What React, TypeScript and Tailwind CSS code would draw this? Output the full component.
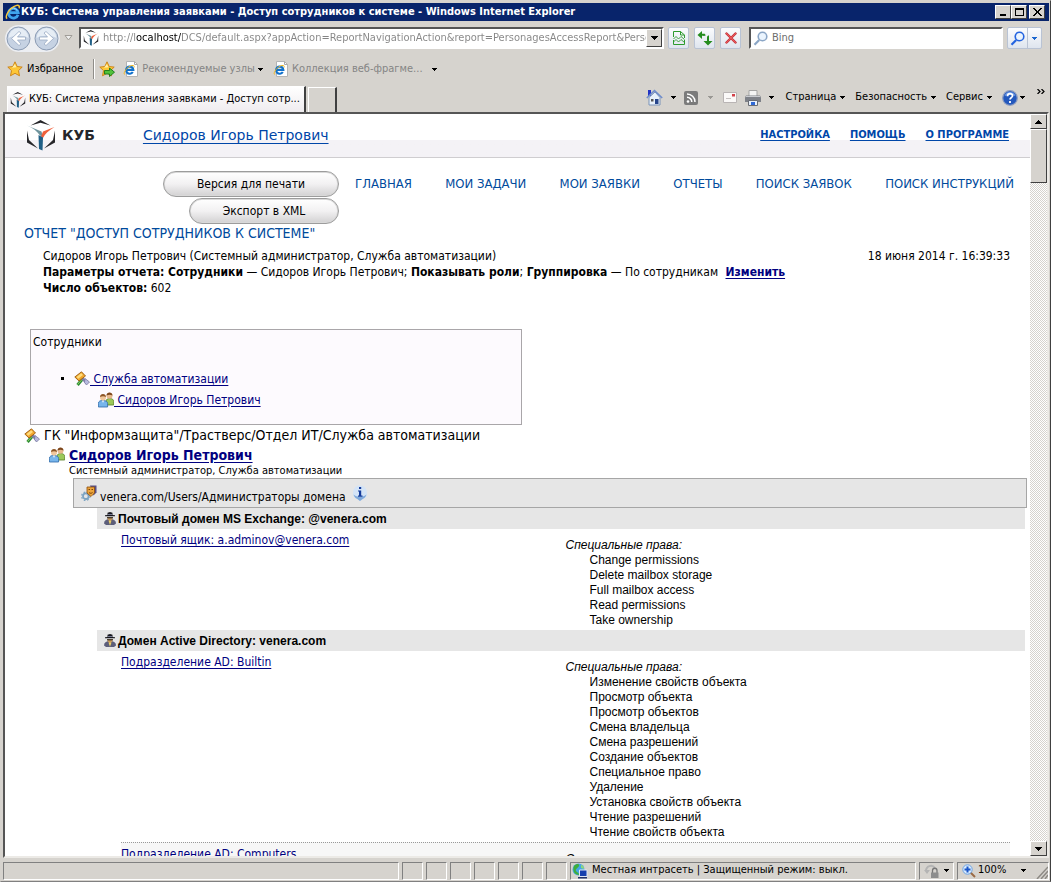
import type { ReactNode } from 'react';

type IconProps = { className?: string };

const URL_TEXT =
  'http://localhost/DCS/default.aspx?appAction=ReportNavigationAction&report=PersonagesAccessReport&PersonagesAccess=1';

const NAV = ['ГЛАВНАЯ', 'МОИ ЗАДАЧИ', 'МОИ ЗАЯВКИ', 'ОТЧЕТЫ', 'ПОИСК ЗАЯВОК', 'ПОИСК ИНСТРУКЦИЙ'];

const MAIL_RIGHTS = [
  'Change permissions',
  'Delete mailbox storage',
  'Full mailbox access',
  'Read permissions',
  'Take ownership',
];

const AD_RIGHTS = [
  'Изменение свойств объекта',
  'Просмотр объекта',
  'Просмотр объектов',
  'Смена владельца',
  'Смена разрешений',
  'Создание объектов',
  'Специальное право',
  'Удаление',
  'Установка свойств объекта',
  'Чтение разрешений',
  'Чтение свойств объекта',
];

/* ---------- icons ---------- */

function IeIcon({ className = 'size-4' }: IconProps) {
  return (
    <svg className={`${className} shrink-0`} viewBox="0 0 16 16" fill="none">
      <path d="M13 10.800A4.800 4.800 0 1 1 13.200 8.600H4.500" stroke="#3fa4ee" strokeWidth="2.800" />
      <path d="M12.200 6.600A4.600 4.600 0 0 0 4 6.400" stroke="#a8dcfb" strokeWidth="1" />
      <path d="M2.200 14.600C-1 13.200 4.500 3.500 11 1.600c3-.8 4 .6 3 2.800" stroke="#f8c83a" strokeWidth="1.500" />
    </svg>
  );
}

function PageIcon() {
  return (
    <svg className="size-4 shrink-0" viewBox="0 0 16 16" fill="none">
      <path d="M3.500.5h8l3 3v12h-11z" fill="#fff" stroke="#b4b4b4" />
      <path d="M11.500.5v3h3" stroke="#a9a9a9" />
      <path d="M9.800 11A3.600 3.600 0 1 1 10.300 8.800H3.500" stroke="#1272cc" strokeWidth="2.200" />
      <path d="M1.500 13.500C0 12 4 5.500 9 4.500c2-.3 2.500.5 2 2" stroke="#f3b71c" strokeWidth="1" />
    </svg>
  );
}

function CubeIcon({ className = 'size-4' }: IconProps) {
  return (
    <svg className={`${className} shrink-0`} viewBox="0 0 28 31">
      <path d="M3.500 5.500 13.500 0l10 5.500-10-2.700z" fill="#26262a" />
      <path d="M0 10.500 2 20l9 8.500L0 22.500z" fill="#26262a" />
      <path d="M28 10.500 26 20l-9 8.500 11-6z" fill="#26262a" />
      <path d="M0 5.500 14.500 11.500 16 17l-3-1.500C10 11 6 8 0 5.500z" fill="#6f949c" />
      <path d="M27.500 7 16 11.500 14 16.500l2 1.500c2-4 5.500-7.500 11.500-11z" fill="#f0613c" />
      <path d="M11.500 15l4.500 2.500-.5 13-3.500-1.500z" fill="#1f5f86" />
    </svg>
  );
}

function Star({ add = false }: { add?: boolean }) {
  return (
    <svg className="size-4 shrink-0" viewBox="0 0 16 16">
      <path
        d="M8 .8l2.200 4.700 5 .6-3.700 3.500 1 5.200L8 12.300l-4.500 2.500 1-5.200L.8 6.100l5-.6z"
        fill="#fdc738"
        stroke="#c97f12"
        strokeWidth=".9"
      />
      <path d="M8 3l1.300 3.300L5 6.800z" fill="#fff0a8" />
      {add && <path d="M5.500 9.500h5V7l5 4.200-5 4.300V13h-5z" fill="#52c23c" stroke="#16781a" strokeWidth=".9" />}
    </svg>
  );
}

function Arrow({ className = 'text-black' }: IconProps) {
  return (
    <svg className={`h-[3px] w-[5px] shrink-0 ${className}`} viewBox="0 0 5 3" shapeRendering="crispEdges">
      <path d="M0 0h5L2.500 3z" fill="currentColor" />
    </svg>
  );
}

function ScrollArrow({ up = false }: { up?: boolean }) {
  return (
    <svg className="h-1 w-[7px]" viewBox="0 0 7 4" shapeRendering="crispEdges">
      <path d={up ? 'M0 4h7L3.500 0z' : 'M0 0h7L3.500 4z'} />
    </svg>
  );
}

function NavCircle({ forward = false }: { forward?: boolean }) {
  return (
    <svg className="size-[25px]" viewBox="0 0 25 25" fill="none">
      <circle cx="12.500" cy="12.500" r="11.500" fill="#c6d2e3" stroke="#8b9bb3" />
      <path d="M2.500 12a10 10 0 0 1 20 0c-5-3-15-3-20 0z" fill="#e6edf5" />
      <path
        d={forward ? 'M5.500 11h8L10 7l2-1.500 7.500 7-7.500 7L10 18l3.500-4h-8z' : 'M19.500 11h-8L15 7l-2-1.500-7.500 7 7.500 7L15 18l-3.500-4h8z'}
        fill="#fff"
        stroke="#9aabc4"
        strokeWidth=".8"
      />
    </svg>
  );
}

function HomeIcon() {
  return (
    <svg className="size-[17px] shrink-0" viewBox="0 0 17 17">
      <path d="M2 1h3v6H2z" fill="#2233c4" />
      <path d="M3 8.500 9 3l5 5.500V16H3z" fill="#e8f1fb" stroke="#7b93b8" />
      <path d="M.8 9 8.500 1.500 16.200 9" fill="none" stroke="#6f8dcb" strokeWidth="1.600" />
      <path d="M9 10h3.500v5H9z" fill="#27458b" />
      <path d="M5 10h2.500v2.500H5z" fill="#555" />
    </svg>
  );
}

function RssIcon() {
  return (
    <svg className="size-[14px] shrink-0" viewBox="0 0 14 14" fill="none">
      <rect width="14" height="14" rx="2" fill="#7b7b7b" />
      <circle cx="4" cy="10.500" r="1.300" fill="#fff" />
      <path d="M3 6.200A4.800 4.800 0 0 1 7.800 11M3 3a8 8 0 0 1 8 8" stroke="#fff" strokeWidth="1.500" />
    </svg>
  );
}

function MailIcon() {
  return (
    <svg className="h-[11px] w-[14px] shrink-0" viewBox="0 0 14 11">
      <path d="M.5.5h13v10H.5z" fill="#fbf9f8" stroke="#b9b4b4" />
      <path d="M9 2h3v2.500H9z" fill="#d3424a" />
      <path d="M3 6.500h5" stroke="#c6c1c1" />
    </svg>
  );
}

function PrinterIcon() {
  return (
    <svg className="size-4 shrink-0" viewBox="0 0 16 16">
      <path d="M4 .5h8V7H4z" fill="#f4f4f4" stroke="#a5a5a5" />
      <path d="M1 5.500h14l1 2V12H0V7.500z" fill="#7e8188" />
      <path d="M1 6.500h14" stroke="#c9cbd0" />
      <path d="M3.500 10.500h9v5h-9z" fill="#e7f0fc" stroke="#686b73" />
      <path d="M6 12h4v3H6z" fill="#2f68d5" />
    </svg>
  );
}

function HelpIcon() {
  return (
    <svg className="size-4 shrink-0" viewBox="0 0 16 16" fill="none">
      <circle cx="8" cy="8" r="7.300" fill="#2358bd" stroke="#8c9cc0" strokeWidth="1.200" />
      <path d="M2.500 6a5.800 5.800 0 0 1 11 0c-3-1.500-8-1.500-11 0z" fill="#6e9ae6" />
      <path d="M5.500 6.200C5.500 2.800 10.800 3 10.500 6c-.2 1.600-2.500 1.800-2.500 3.600M8 11v2" stroke="#fff" strokeWidth="1.800" />
    </svg>
  );
}

function BrokenPageIcon() {
  return (
    <svg className="h-[14px] w-3" viewBox="0 0 12 14" fill="none" stroke="#2d9a2d">
      <path d="M.5 6V.5h7l4 3.500v3M7.500.5V4h4M.5 9v4.500h11V9" />
      <path d="M.5 8 3 5.500 5.500 8 8 5.500l3.500 3M.5 11 3 8.500 5.500 11 8 8.500l3.500 3" strokeWidth=".9" />
    </svg>
  );
}

function RefreshIcon() {
  return (
    <svg className="size-4" viewBox="0 0 16 16" fill="#258c1f">
      <path d="M5 1v2.800h2.500v2H5V9L.5 5z" />
      <path d="M7 3.800c1 0 1.500.7 1.500 2H6z" />
      <path d="M11 15.500 6.500 11H10V7.500C10 6 11 5.500 12 5.500v5.500h3.500z" />
    </svg>
  );
}

function StopIcon() {
  return (
    <svg className="size-3" viewBox="0 0 12 12" fill="none" strokeLinecap="round">
      <path d="M1.500 1.500l9 9M10.500 1.500l-9 9" stroke="#b8262c" strokeWidth="2.400" />
      <path d="M1.500 1.500l9 9M10.500 1.500l-9 9" stroke="#e8575c" strokeWidth="1.200" />
    </svg>
  );
}

function Magnifier({ className = '' }: IconProps) {
  return (
    <svg className={`size-[15px] shrink-0 ${className}`} viewBox="0 0 15 15" fill="none">
      <circle cx="9.500" cy="5.500" r="4.300" fill="#eaf4fe" stroke="currentColor" strokeWidth="1.600" />
      <path d="M6.200 9 1.500 13.700" stroke="currentColor" strokeWidth="2.200" />
    </svg>
  );
}

function ZoomIcon() {
  return (
    <svg className="size-[14px] shrink-0" viewBox="0 0 14 14" fill="none">
      <path d="M8.500 8.500l4.500 4.500" stroke="#9b6b45" strokeWidth="2" />
      <circle cx="5.500" cy="5.500" r="4.700" fill="#d7eafd" stroke="#6da3e4" />
      <path d="M5.500 2.500v6M2.500 5.500h6" stroke="#1b56c8" strokeWidth="2" />
    </svg>
  );
}

function GlobeIcon() {
  return (
    <svg className="size-4 shrink-0" viewBox="0 0 16 16">
      <circle cx="6.500" cy="6.500" r="6" fill="#46a6e6" />
      <path d="M2 3c3-3 6-2 5 0S3 6 4 8s3 1 3 4C3 12 0 8 2 3z" fill="#3fae3a" />
      <path d="M9 2c2 0 3 2 3 4L9 5z" fill="#8fd67a" />
      <path d="M7.500 7h7.500v6.500H7.500z" fill="#163fae" stroke="#dfe6f3" />
      <path d="M6 14h9v1.500H6z" fill="#22326b" />
    </svg>
  );
}

function LockIcon() {
  return (
    <svg className="size-4 shrink-0" viewBox="0 0 16 16" fill="none">
      <path d="M2 8c0-5 6-7 9-3" stroke="#b4b4b4" strokeWidth="2" />
      <path d="M0 7h6l-3 4z" fill="#b4b4b4" />
      <path d="M8.500 10V7.500a2.200 2.200 0 0 1 4.500 0V10" stroke="#777" strokeWidth="1.300" />
      <path d="M7 9.500h7.500V15H7z" fill="#8d8d8d" />
    </svg>
  );
}

function HammerIcon() {
  return (
    <svg className="size-4 shrink-0" viewBox="0 0 16 16">
      <path d="M8.500 8 3.500 14" stroke="#2d8a35" strokeWidth="3" />
      <path d="M8 8.500l-4.500 5" stroke="#8ed468" />
      <path d="M8 7l5 5" stroke="#7f80a8" strokeWidth="3" />
      <path d="M11 7.500 15.500 11l-3 3-2-2.500z" fill="#b9bae0" stroke="#77789e" strokeWidth=".8" />
      <path d="M.8 6 7.500.8 11.500 5 5 10z" fill="#f2a62c" stroke="#9a5b12" strokeWidth=".9" />
      <path d="M2.500 6 7.200 2.200 9 4 4.200 7.800z" fill="#ffdc7c" />
    </svg>
  );
}

function PeopleIcon() {
  return (
    <svg className="size-4 shrink-0" viewBox="0 0 16 16">
      <path d="M8 13V9.500C8 7 10 6.500 12 6.500s3.700 1 3.700 3V13z" fill="#9cc85a" stroke="#577f24" strokeWidth=".8" />
      <circle cx="11.500" cy="3.800" r="3" fill="#e8b98d" />
      <path d="M8.500 3.500c0-4 6-4 6 0-2-1-4-1-6 0z" fill="#7c461c" />
      <path d="M.4 15v-3.500c0-2.500 2-3 4.600-3s4.600 1 4.600 3V15z" fill="#77b5ec" stroke="#2c68a8" strokeWidth=".8" />
      <path d="M4 8.500h2L5 11z" fill="#fff" />
      <circle cx="5" cy="5.500" r="3" fill="#f0c79c" />
      <path d="M2 5c0-4 6-4 6 0-2-1-4-1-6 0z" fill="#8a5425" />
    </svg>
  );
}

function RoleIcon() {
  return (
    <svg className="size-4 shrink-0" viewBox="0 0 16 16">
      <circle cx="4.800" cy="11.200" r="2.800" fill="none" stroke="#7ba3c2" strokeWidth="1.800" />
      <circle cx="4.800" cy="11.200" r="4.200" fill="none" stroke="#7ba3c2" strokeWidth="1.200" strokeDasharray="1.700 1.700" />
      <path d="M9 .5h6.500v7l-3 3z" fill="#574f86" />
      <path d="M6 2h7.500v6L10 11.500 6 8z" fill="#eda53a" stroke="#8a4c10" strokeWidth=".8" />
      <path d="M7.500 4.500h1.500M10.500 4.500H12M8 7.500c1 1 2.500 1 3.500 0" stroke="#6b3608" strokeWidth=".9" fill="none" />
    </svg>
  );
}

function InfoIcon() {
  return (
    <svg className="size-4 shrink-0" viewBox="0 0 16 16">
      <path d="M8 .5a7 7 0 0 1 3 13.300L8 16l-3-2.200A7 7 0 0 1 8 .5z" fill="#d4e4f7" />
      <path d="M1.500 9.500c3 3 10 3 13 0-.6 2.400-2 3.600-3.500 4.300L8 16l-3-2.200c-1.500-.7-3-1.900-3.500-4.300z" fill="#7fa9da" />
      <path d="M7 2h2.200v2H7zM6 5.500h3.200v5h1.300v1.200H6v-1.200h1V6.500H6z" fill="#143c9c" />
    </svg>
  );
}

function AgentIcon() {
  return (
    <svg className="h-[13px] w-3 shrink-0" viewBox="0 0 12 13">
      <path d="M0 11.500C0 8.500 2 7 6 7s6 1.500 6 4.500L10 13H2z" fill="#5c5e7a" />
      <path d="M3 5h6L8 8 6 9.500 4 8z" fill="#c89a5c" />
      <path d="M1 3.300 3.500 3V.8L6 0l2.500.8V3l2.500.3v1H1z" fill="#17171c" />
      <path d="M4 2.500h4" stroke="#8f93b8" strokeWidth=".8" />
      <path d="M4.700 9.300l1.300-1 1.300 1L6 12.800z" fill="#ecd36b" />
      <path d="M3 5.800h6" stroke="#17171c" />
    </svg>
  );
}

/* ---------- browser frame ---------- */

const RAISED = 'border border-t-white border-l-white border-r-[#404040] border-b-[#404040] bg-[#d6d3ce]';
const SUNKEN = 'border border-t-[#808080] border-l-[#808080] border-r-white border-b-white';

function CaptionButton({ label, children }: { label: string; children: ReactNode }) {
  return (
    <button aria-label={label} className={`flex h-[14px] w-4 items-center justify-center ${RAISED}`}>
      <svg className="h-2 w-[9px]" viewBox="0 0 9 8" fill="none" stroke="#000" shapeRendering="crispEdges">
        {children}
      </svg>
    </button>
  );
}

function ToolButton({ label, children }: { label: string; children: ReactNode }) {
  return (
    <button
      aria-label={label}
      className="flex h-[22px] w-[21px] items-center justify-center rounded-xs border border-[#b9c3d4] bg-linear-to-b from-[#fbfcfe] to-[#dfe5ee]"
    >
      {children}
    </button>
  );
}

function TitleBar() {
  return (
    <div className="flex h-[18px] shrink-0 items-center bg-[#08246b] pr-1 pl-0.5 text-white">
      <IeIcon />
      <h1 className="flex-1 truncate text-[11px] font-bold">
        КУБ: Система управления заявками - Доступ сотрудников к системе - Windows Internet Explorer
      </h1>
      <CaptionButton label="Свернуть">
        <path d="M1 6.500h6M1 7.500h6" />
      </CaptionButton>
      <CaptionButton label="Развернуть">
        <path d="M.5.500h8v7h-8zM0 1.500h9" />
      </CaptionButton>
      <span className="w-0.5" />
      <CaptionButton label="Закрыть">
        <path d="M1 0l7 8M8 0L1 8" strokeWidth="1.500" />
      </CaptionButton>
    </div>
  );
}

function AddressBar() {
  return (
    <div className="flex h-[34px] shrink-0 items-center pr-[7px] pl-0.5">
      <div className="flex gap-[3px] rounded-full bg-[#eceef2] p-px">
        <button aria-label="Назад">
          <NavCircle />
        </button>
        <button aria-label="Вперед">
          <NavCircle forward />
        </button>
      </div>
      <svg className="mx-1 mr-1.5 h-1.5 w-[9px]" viewBox="0 0 9 6">
        <path d="M1 .5h7L4.500 5z" fill="#eee" stroke="#a09d98" />
      </svg>
      <div className="flex h-[22px] min-w-0 flex-1 items-center border-2 border-t-[#555] border-r-white border-b-white border-l-[#555] bg-white pl-0.5">
        <CubeIcon />
        <input
          aria-label="Адрес"
          defaultValue={URL_TEXT}
          className="ml-1 h-4 min-w-0 flex-1 bg-[linear-gradient(90deg,#858585_33px,#000_33px,#000_78px,#858585_78px)] bg-clip-text text-[11px] text-transparent outline-none"
        />
        <button aria-label="Показать адреса" className={`flex h-[18px] w-4 items-center justify-center ${RAISED}`}>
          <ScrollArrow />
        </button>
      </div>
      <div className="mr-2 ml-1 flex gap-[5px]">
        <ToolButton label="Режим совместимости">
          <BrokenPageIcon />
        </ToolButton>
        <ToolButton label="Обновить">
          <RefreshIcon />
        </ToolButton>
        <ToolButton label="Остановить">
          <StopIcon />
        </ToolButton>
      </div>
      <div className="flex h-[22px] w-[254px] items-center border-2 border-t-[#555] border-r-white border-b-white border-l-[#555] bg-white pl-0.5">
        <Magnifier className="text-[#8ba6c6]" />
        <input
          aria-label="Поиск"
          placeholder="Bing"
          className="ml-1 min-w-0 flex-1 text-[11px] outline-none placeholder:text-[#6d6d6d]"
        />
      </div>
      <div className="ml-1 flex h-[22px] rounded-xs border border-[#b9c3d4] bg-linear-to-b from-[#fbfcfe] to-[#dfe5ee]">
        <button aria-label="Найти" className="flex w-5 items-center justify-center border-r border-[#b9c3d4] text-[#2464e0]">
          <Magnifier />
        </button>
        <button aria-label="Параметры поиска" className="flex w-[13px] items-center justify-center">
          <Arrow className="text-[#1a66d0]" />
        </button>
      </div>
    </div>
  );
}

function FavoritesBar() {
  return (
    <div className="flex h-7 shrink-0 items-center pl-1 text-[11px] text-[#858585]">
      <button className="flex items-center gap-1 text-black">
        <Star />
        Избранное
      </button>
      <span className="mr-1 ml-2.5 h-5 w-0.5 border-l border-[#8f8d89] bg-white" />
      <button aria-label="Добавить на панель избранного" className="mr-2">
        <Star add />
      </button>
      <button className="flex items-center gap-[3px]">
        <PageIcon />
        Рекомендуемые узлы
        <Arrow />
      </button>
      <button className="ml-2.5 flex items-center gap-[3px]">
        <PageIcon />
        Коллекция веб-фрагме...
        <Arrow className="ml-1.5 text-black" />
      </button>
    </div>
  );
}

function TabBar() {
  return (
    <div className="flex h-[29px] shrink-0 items-end pr-1 pl-1 text-[11px]">
      <button className="flex h-[26px] w-[299px] items-center gap-[3px] border border-t-white border-r-2 border-b-0 border-l-white border-r-[#404040] bg-linear-to-b from-white to-[#efecef] pl-0.5">
        <CubeIcon />
        <span className="truncate">КУБ: Система управления заявками - Доступ сотр...</span>
      </button>
      <button
        aria-label="Новая вкладка"
        className="ml-0.5 h-[25px] w-[29px] border border-t-white border-r-2 border-b-0 border-l-white border-r-[#404040]"
      />
      <div className="ml-auto flex h-[29px] items-center">
        <button aria-label="Домой" className="flex items-center gap-2">
          <HomeIcon />
          <Arrow />
        </button>
        <button aria-label="Веб-каналы" className="ml-2 flex items-center gap-2.5">
          <RssIcon />
          <Arrow className="text-[#9a9894]" />
        </button>
        <button aria-label="Почта" className="ml-2.5">
          <MailIcon />
        </button>
        <button aria-label="Печать" className="mr-3 ml-2 flex items-center gap-2">
          <PrinterIcon />
          <Arrow />
        </button>
        {['Страница', 'Безопасность', 'Сервис'].map((label) => (
          <button key={label} className="mr-2.5 flex items-center gap-1">
            {label}
            <Arrow />
          </button>
        ))}
        <button aria-label="Справка" className="flex items-center gap-0.5">
          <HelpIcon />
          <Arrow />
        </button>
        <button aria-label="Еще" className="mb-3 ml-3">
          <svg className="h-[5px] w-2" viewBox="0 0 8 5" fill="none" stroke="#000" strokeWidth="1.200">
            <path d="M.5 0 3 2.500.5 5M4.500 0 7 2.500 4.500 5" />
          </svg>
        </button>
      </div>
    </div>
  );
}

function Scrollbar() {
  return (
    <div className="flex w-[17px] shrink-0 flex-col bg-[repeating-conic-gradient(#fff_0_25%,#d6d3ce_0_50%)] bg-[length:2px_2px]">
      <button aria-label="Вверх" className={`flex h-[15px] items-center justify-center ${RAISED}`}>
        <ScrollArrow up />
      </button>
      <div className={`h-[54px] ${RAISED}`} />
      <button aria-label="Вниз" className={`mt-auto flex h-[15px] items-center justify-center ${RAISED}`}>
        <ScrollArrow />
      </button>
    </div>
  );
}

function StatusBar() {
  return (
    <div className="flex h-[23px] shrink-0 items-center gap-[3px] pt-0.5 text-[11px]">
      <div className={`h-[18px] flex-1 ${SUNKEN}`} />
      {[1, 2, 3, 4, 5, 6, 7].map((n) => (
        <div key={n} className={`h-[18px] w-[21px] ${SUNKEN}`} />
      ))}
      <div className={`flex h-[18px] w-[346px] items-center gap-1 pl-px ${SUNKEN}`}>
        <GlobeIcon />
        Местная интрасеть | Защищенный режим: выкл.
      </div>
      <div className={`flex h-[18px] w-[35px] items-center justify-between px-1 ${SUNKEN}`}>
        <LockIcon />
        <Arrow />
      </div>
      <div className={`flex h-[18px] w-[92px] items-center pl-1 ${SUNKEN}`}>
        <ZoomIcon />
        <span className="ml-0.5 flex-1">100%</span>
        <Arrow />
        <svg className="ml-2.5 h-[14px] w-3 self-end" viewBox="0 0 12 14" stroke="#8d8a85" strokeWidth="1.500">
          <path d="M1 14 12 2M5 14l7-8M9 14l3-4" />
        </svg>
      </div>
    </div>
  );
}

/* ---------- report page ---------- */

function PillButton({ className, children }: { className: string; children: ReactNode }) {
  return (
    <button
      className={`h-[26px] rounded-full border border-[#9c9c9c] bg-linear-to-b from-white via-[#f2f1f2] to-[#d2d1d2] text-[12px] shadow-[inset_0_0_0_1px_#d9d9d9] ${className}`}
    >
      {children}
    </button>
  );
}

function SectionHeader({ children }: { children: ReactNode }) {
  return (
    <h3 className="mr-[5px] ml-[92px] flex h-[21px] items-center gap-0.5 bg-[#e6e6e6] pl-[7px] font-['Liberation_Sans',sans-serif] text-[12px] font-bold">
      <AgentIcon />
      {children}
    </h3>
  );
}

function ObjectRow({ name, rights, alt = false }: { name: string; rights: string[]; alt?: boolean }) {
  return (
    <div
      className={`mr-5 ml-[116px] grid grid-cols-2 pb-0.5 leading-[15px] text-[12px] ${alt ? 'border-t border-dotted border-[#999] bg-[#f7f7f7]' : ''}`}
    >
      <div className="pt-1">
        <a href="#" className="block w-fit text-[#000080] underline underline-offset-2">
          {name}
        </a>
      </div>
      <div className="pt-[9px] font-['Liberation_Sans',sans-serif]">
        <p className="italic">Специальные права:</p>
        <ul className="pl-6">
          {rights.map((right) => (
            <li key={right}>{right}</li>
          ))}
        </ul>
      </div>
    </div>
  );
}

function Report() {
  return (
    <main className="min-w-0 flex-1 overflow-hidden bg-white">
      <header className="flex h-11 items-center border-b border-[#cfcdd0] bg-linear-to-b from-white from-60% to-[#f4f2f6] to-60% pr-[21px] pl-[22px] text-[#0046a8]">
        <CubeIcon className="h-[31px] w-7" />
        <span className="ml-[7px] font-['DejaVu_Sans',sans-serif] text-[14px] font-bold text-[#26262a]">КУБ</span>
        <a href="#" className="ml-12 font-['DejaVu_Sans',sans-serif] text-[14px] underline underline-offset-3">
          Сидоров Игорь Петрович
        </a>
        <div className="ml-auto flex gap-5 text-[11px] font-bold">
          {['НАСТРОЙКА', 'ПОМОЩЬ', 'О ПРОГРАММЕ'].map((label) => (
            <a key={label} href="#" className="underline underline-offset-2">
              {label}
            </a>
          ))}
        </div>
      </header>

      <div className="flex items-start pt-[13px] pr-4">
        <div className="flex w-[334px] shrink-0 flex-col items-end gap-px">
          <PillButton className="w-44">Версия для печати</PillButton>
          <PillButton className="w-[150px]">Экспорт в XML</PillButton>
        </div>
        <nav className="ml-4 flex h-[26px] flex-1 items-center justify-between text-[13px] text-[#004a9c]">
          {NAV.map((label) => (
            <a key={label} href="#">
              {label}
            </a>
          ))}
        </nav>
      </div>

      <h2 className="pl-[19px] text-[14px] leading-[18px] text-[#004a9c]">ОТЧЕТ "ДОСТУП СОТРУДНИКОВ К СИСТЕМЕ"</h2>

      <div className="mt-1.5 flex justify-between pr-5 pl-[38px] text-[12px] leading-4">
        <div>
          <p>Сидоров Игорь Петрович (Системный администратор, Служба автоматизации)</p>
          <p>
            <b>Параметры отчета: Сотрудники</b> — Сидоров Игорь Петрович; <b>Показывать роли</b>; <b>Группировка</b> — По
            сотрудникам{' '}
            <a href="#" className="ml-1 font-bold text-[#000080] underline underline-offset-2">
              Изменить
            </a>
          </p>
          <p>
            <b>Число объектов:</b> 602
          </p>
        </div>
        <time className="shrink-0">18 июня 2014 г. 16:39:33</time>
      </div>

      <section className="mt-[33px] ml-[25px] h-24 w-[48%] border border-[#a9a6a9] bg-[#fdfafe] pt-1 pl-0.5 text-[12px] leading-4">
        <h3>Сотрудники</h3>
        <ul className="mt-[18px] pl-7">
          <li className="flex h-[21px] items-center">
            <span className="mr-2.5 size-[3px] bg-black" />
            <HammerIcon />
            <a href="#" className="whitespace-pre text-[#000080] underline underline-offset-2">
              {' Служба автоматизации'}
            </a>
          </li>
          <li className="flex h-[21px] items-center pl-[37px]">
            <PeopleIcon />
            <a href="#" className="whitespace-pre text-[#000080] underline underline-offset-2">
              {' Сидоров Игорь Петрович'}
            </a>
          </li>
        </ul>
      </section>

      <h3 className="flex h-[21px] items-center gap-1 pl-[19px] text-[14px]">
        <HammerIcon />
        ГК "Информзащита"/Трастверс/Отдел ИТ/Служба автоматизации
      </h3>
      <div className="flex h-[18px] items-center gap-1 pl-11">
        <PeopleIcon />
        <a href="#" className="text-[14px] font-bold text-[#000080] underline underline-offset-2">
          Сидоров Игорь Петрович
        </a>
      </div>
      <p className="pl-16 text-[11px] leading-[14px]">Системный администратор, Служба автоматизации</p>

      <div className="mr-[3px] ml-[68px] flex h-[30px] items-start border border-[#a6a6a6] bg-[#e6e6e6] pt-1.5 pl-[7px] text-[12px]">
        <RoleIcon />
        <span className="mr-1.5 ml-[3px] pt-1 leading-4">venera.com/Users/Администраторы домена</span>
        <InfoIcon />
      </div>

      <SectionHeader>Почтовый домен MS Exchange: @venera.com</SectionHeader>
      <ObjectRow name="Почтовый ящик: a.adminov@venera.com" rights={MAIL_RIGHTS} />
      <SectionHeader>Домен Active Directory: venera.com</SectionHeader>
      <ObjectRow name="Подразделение AD: Builtin" rights={AD_RIGHTS} />
      <ObjectRow name="Подразделение AD: Computers" rights={[]} alt />
    </main>
  );
}

export default function App() {
  return (
    <div className="flex h-screen flex-col border border-t-[#d6d3ce] border-r-[#404040] border-b-[#808080] border-l-[#d6d3ce] bg-[#d6d3ce] pt-0.5 pr-px pl-0.5 font-['DejaVu_Sans_Condensed','DejaVu_Sans',sans-serif] text-black">
      <TitleBar />
      <AddressBar />
      <FavoritesBar />
      <TabBar />
      <div className="flex min-h-0 flex-1 border-2 border-t-[#555] border-r-[#eceae6] border-b-[#eceae6] border-l-[#555]">
        <Report />
        <Scrollbar />
      </div>
      <StatusBar />
    </div>
  );
}
